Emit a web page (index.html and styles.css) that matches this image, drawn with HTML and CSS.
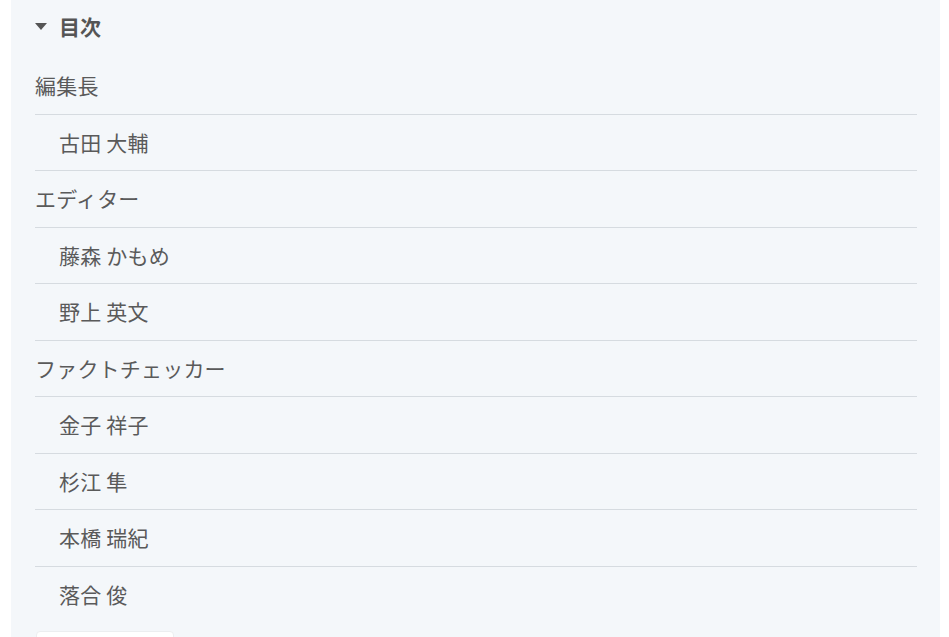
FILE: index.html
```html
<!DOCTYPE html>
<html lang="ja">
<head>
<meta charset="utf-8">
<link rel="stylesheet" href="styles.css">
</head>
<body>
<div class="page">
  <nav class="toc">
    <div class="toc-title"><span class="caret"></span>目次</div>
    <ul class="toc-list">
      <li class="lv1">編集長</li>
      <li class="lv2">古田 大輔</li>
      <li class="lv1">エディター</li>
      <li class="lv2">藤森 かもめ</li>
      <li class="lv2">野上 英文</li>
      <li class="lv1">ファクトチェッカー</li>
      <li class="lv2">金子 祥子</li>
      <li class="lv2">杉江 隼</li>
      <li class="lv2">本橋 瑞紀</li>
      <li class="lv2 last">落合 俊</li>
    </ul>
    <div class="next-card"></div>
  </nav>
</div>
</body>
</html>
```
FILE: styles.css
```css
html, body {
  margin: 0;
  padding: 0;
  background: #ffffff;
  overflow: hidden;
}
.page {
  padding-left: 11px;
  height: 637px;
}
.toc {
  width: 929px;
  box-sizing: border-box;
  height: 637px;
  background: #f4f7fa;
  padding: 10px 23px 0 24px;
  font-family: "Noto Sans CJK JP", "Noto Sans", sans-serif;
  color: #5a5a5a;
}
.toc-title {
  display: flex;
  align-items: center;
  font-size: 21px;
  font-weight: bold;
  line-height: 32px;
  color: #555;
}
.caret {
  width: 0;
  height: 0;
  border-left: 6px solid transparent;
  border-right: 6px solid transparent;
  border-top: 7px solid #555;
  margin-right: 12px;
}
.toc-list {
  list-style: none;
  margin: 16px 0 0 0;
  padding: 0;
}
.toc-list li {
  font-size: 21px;
  line-height: 33.5px;
  padding: 11px 0 11px 0;
  border-bottom: 1px solid #d6dbe0;
  letter-spacing: 0.2px;
}
.toc-list li.lv2 {
  padding-left: 24px;
}
.toc-list li.last {
  border-bottom: none;
}
.next-card {
  margin-top: 9px;
  width: 136px;
  height: 30px;
  background: #fff;
  border: 1px solid #eceef0;
  border-radius: 4px;
  margin-left: 1px;
}
```
